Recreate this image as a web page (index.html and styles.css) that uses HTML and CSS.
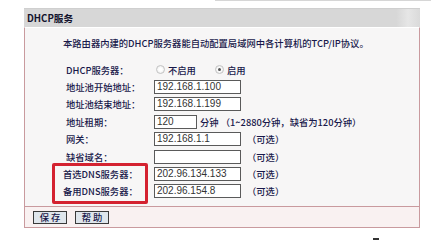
FILE: index.html
```html
<!DOCTYPE html>
<html>
<head>
<meta charset="utf-8">
<link rel="stylesheet" href="styles.css">
</head>
<body>
<div class="topline"></div>
<div class="panel">
  <div class="hd">DHCP服务</div>
  <div class="body">
    <p class="desc">本路由器内建的DHCP服务器能自动配置局域网中各计算机的TCP/IP协议。</p>
    <div class="form">
      <div class="row"><span class="lbl">DHCP服务器：</span><span class="radio"></span><span class="rtxt">不启用</span><span class="radio on"></span><span class="rtxt">启用</span></div>
      <div class="row"><span class="lbl">地址池开始地址：</span><span class="inp">192.168.1.100</span></div>
      <div class="row"><span class="lbl">地址池结束地址：</span><span class="inp">192.168.1.199</span></div>
      <div class="row"><span class="lbl">地址租期：</span><span class="inp short">120</span><span class="note">分钟 （1~2880分钟，缺省为120分钟）</span></div>
      <div class="row"><span class="lbl">网关：</span><span class="inp">192.168.1.1</span><span class="opt">（可选）</span></div>
      <div class="row"><span class="lbl">缺省域名：</span><span class="inp"></span><span class="opt">（可选）</span></div>
      <div class="row"><span class="lbl dns">首选DNS服务器：</span><span class="inp">202.96.134.133</span><span class="opt">（可选）</span></div>
      <div class="row"><span class="lbl dns">备用DNS服务器：</span><span class="inp">202.96.154.8</span><span class="opt">（可选）</span></div>
    </div>
    <div class="hl"></div>
  </div>
  <div class="ft"><span class="btn">保 存</span><span class="btn">帮 助</span></div>
</div>
<div class="mark"></div>
</body>
</html>
```

FILE: styles.css
```css
html, body {
  margin: 0;
  padding: 0;
  background: #ffffff;
  width: 431px;
  height: 245px;
  overflow: hidden;
  position: relative;
  font-family: "Noto Sans CJK SC", "DejaVu Sans", sans-serif;
  color: #1e1e52;
}
.topline {
  height: 1px;
  margin-left: 215px;
  background: #d6d6d6;
}
.panel {
  margin: 7px 0 0 24px;
  width: 396px;
}
.hd {
  height: 19px;
  background: linear-gradient(to right, #d7d7d7 0%, #d7d7d7 94%, #e6e6e6 97%, #dadada 100%);
  border-top: 1px solid #cfcfcf;
  box-sizing: border-box;
  padding-left: 3px;
  font-size: 9.6px;
  line-height: 18px;
  color: #14142e;
  font-weight: 700;
}
.body {
  position: relative;
  background: #f7f6f6;
  border-left: 1px solid #c99a9e;
  border-right: 1px solid #c99a9e;
  border-top: 1px solid #ffffff;
  height: 179px;
  box-sizing: border-box;
  padding-top: 7px;
}
.desc {
  margin: 0 0 0 38px;
  font-size: 9.3px;
  line-height: 16px;
  color: #18184a;
  font-weight: 500;
  white-space: nowrap;
}
.form {
  margin-top: 10px;
  padding-left: 41px;
}
.row {
  display: flex;
  align-items: center;
  height: 17.4px;
  font-size: 9.3px;
  font-weight: 500;
  color: #18184a;
  white-space: nowrap;
}
.lbl {
  width: 88px;
  flex: none;
}
.lbl.dns {
  margin-left: -3px;
  width: 91px;
}
.radio {
  width: 7px;
  height: 7px;
  border-radius: 50%;
  border: 1px solid #c4c4c4;
  background: radial-gradient(circle, #ffffff 30%, #e4e4e4 100%);
  margin: 0 3px 0 2px;
  position: relative;
}
.radio.on::after {
  content: "";
  position: absolute;
  left: 2px;
  top: 2px;
  width: 3px;
  height: 3px;
  border-radius: 50%;
  background: #555;
}
.rtxt {
  margin-right: 17px;
}
.inp {
  width: 87px;
  height: 14px;
  box-sizing: border-box;
  border: 1px solid #5a5a5a;
  background: #ffffff;
  font-family: "Liberation Sans", Arial, sans-serif;
  font-size: 10px;
  font-weight: 400;
  line-height: 12px;
  color: #333;
  padding-left: 2px;
  flex: none;
}
.inp.short {
  width: 43px;
}
.note {
  margin-left: 3px;
}
.opt {
  margin-left: 6px;
}
.hl {
  position: absolute;
  left: 27px;
  top: 135px;
  width: 96px;
  height: 41px;
  box-sizing: border-box;
  border: 3px solid #d42230;
  border-radius: 2px;
}
.ft {
  background: #f9f1f1;
  border: 1px solid #c99a9e;
  height: 22px;
  box-sizing: border-box;
  display: flex;
  align-items: center;
  gap: 8px;
  padding-left: 8px;
}
.btn {
  height: 13px;
  width: 34px;
  box-sizing: border-box;
  border: 1px solid #3a3a3a;
  background: #dfe6ec;
  font-size: 9.3px;
  font-weight: 500;
  line-height: 11px;
  text-align: center;
  color: #18184a;
}
.mark {
  position: absolute;
  left: 373px;
  top: 238px;
  width: 6px;
  height: 2px;
  background: #333;
}
```
